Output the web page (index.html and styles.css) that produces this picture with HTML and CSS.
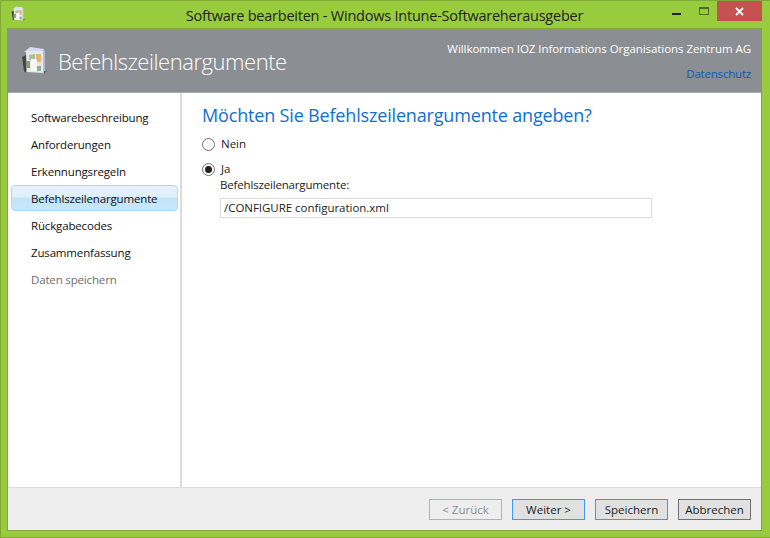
FILE: index.html
```html
<!DOCTYPE html>
<html lang="de">
<head>
<meta charset="utf-8">
<title>Software bearbeiten</title>
<link rel="stylesheet" href="styles.css">
</head>
<body>
<div class="window">
  <div class="titlebar">
    <svg class="app-icon-small" viewBox="0 0 26 30" width="14" height="16"><use href="#box"/></svg>
    <div class="title">Software bearbeiten - Windows Intune-Softwareherausgeber</div>
    <div class="controls">
      <div class="ctl"><span class="min"></span></div>
      <div class="ctl"><span class="max"></span></div>
      <div class="close"><svg viewBox="0 0 9 9" width="9" height="9"><path d="M1 1L8 8M8 1L1 8" stroke="#fff" stroke-width="1.8"/></svg></div>
    </div>
  </div>
  <div class="client">
    <header class="head">
      <svg class="app-icon" viewBox="0 0 26 30" width="26" height="30">
        <defs>
          <g id="box">
            <path d="M3 6L9 1L23 3L22 7Z" fill="#d5daf0"/>
            <path d="M5 5H22V27L6 26Z" fill="#e6e8f0"/>
            <path d="M1 11L5 9V27L3 25Z" fill="#45483f"/>
            <path d="M8 8H20V24H8Z" fill="#eee4d2"/>
            <path d="M15 8H20V16H15Z" fill="#e8b36c"/>
            <path d="M8 9L14 8V13L8 14Z" fill="#a7c293"/>
            <path d="M10 13H16V25H10Z" fill="#f7f7f7"/>
            <path d="M5 15L9 15V22L5 22Z" fill="#8d9786"/>
            <path d="M16 20H20V25H16Z" fill="#8fae9a"/>
            <path d="M22 5L24 4V26L22 28Z" fill="#b4bad6"/>
            <path d="M23 25L26 25L23 28Z" fill="#5c5f63"/>
          </g>
        </defs>
        <use href="#box"/>
      </svg>
      <h1 class="head-title">Befehlszeilenargumente</h1>
      <div class="head-right">
        <div class="welcome">Willkommen IOZ Informations Organisations Zentrum AG</div>
        <a class="privacy">Datenschutz</a>
      </div>
    </header>
    <div class="main">
      <nav class="nav">
        <div class="nav-item">Softwarebeschreibung</div>
        <div class="nav-item">Anforderungen</div>
        <div class="nav-item">Erkennungsregeln</div>
        <div class="nav-item active">Befehlszeilenargumente</div>
        <div class="nav-item">Rückgabecodes</div>
        <div class="nav-item">Zusammenfassung</div>
        <div class="nav-item muted">Daten speichern</div>
      </nav>
      <section class="content">
        <h2 class="question">Möchten Sie Befehlszeilenargumente angeben?</h2>
        <div class="radio-row first"><span class="radio"></span><span>Nein</span></div>
        <div class="radio-row second"><span class="radio checked"></span><span>Ja</span></div>
        <div class="field">
          <div class="field-label">Befehlszeilenargumente:</div>
          <div class="input">/CONFIGURE configuration.xml</div>
        </div>
      </section>
    </div>
    <footer class="foot">
      <div class="btn disabled">&lt; Zurück</div>
      <div class="btn blue">Weiter &gt;</div>
      <div class="btn blue">Speichern</div>
      <div class="btn dark">Abbrechen</div>
    </footer>
  </div>
</div>
</body>
</html>
```
FILE: styles.css
```css
* { box-sizing: border-box; }
html, body { margin: 0; padding: 0; }
body { width: 770px; height: 538px; overflow: hidden; font-family: "Open Sans", "Noto Sans", sans-serif; color: #1a1a1a; }
.window { width: 770px; height: 538px; background: #99cc3c; border: 1px solid #7fa838; border-right: 0; padding: 0 8px 6px 6px; display: flex; flex-direction: column; }
.titlebar { height: 27px; flex: none; display: flex; align-items: center; position: relative; }
.app-icon-small { margin: 0 0 1px 4px; flex: none; filter: blur(0.3px); }
.title { position: absolute; left: 0; right: 0; top: 5px; text-align: center; font-size: 14.5px; line-height: 20px; color: #222; letter-spacing: -0.225px; }
.controls { margin-left: auto; display: flex; align-self: flex-start; position: relative; }
.ctl { width: 27px; height: 20px; display: flex; justify-content: center; align-items: center; }
.min { width: 9px; height: 2px; background: #222; margin-top: 5px; }
.max { width: 10px; height: 8px; border: 1px solid #4f6a24; border-top-width: 2px; }
.close { width: 45px; height: 20px; background: #c75050; display: flex; align-items: center; justify-content: center; }
.client { flex: 1; min-height: 0; display: flex; flex-direction: column; background: #fff; border: 1px solid #7fa838; }
.head { height: 64px; flex: none; background: #8b8e92; border-bottom: 1px solid #a9abae; display: flex; align-items: center; padding: 0 10px 0 13px; }
.app-icon { flex: none; margin-top: 1px; filter: blur(0.4px); }
.head-title { margin: 0 0 0 11px; font-size: 22px; line-height: 30px; font-weight: 300; color: #fff; letter-spacing: -0.45px; }
.head-right { margin-left: auto; align-self: flex-start; text-align: right; padding-top: 12px; }
.welcome { font-size: 11.5px; line-height: 16px; color: #fff; letter-spacing: -0.06px; }
.privacy { display: block; margin-top: 9px; font-size: 11.5px; line-height: 16px; color: #0f5ab4; letter-spacing: -0.2px; }
.main { flex: 1; min-height: 0; display: flex; border-bottom: 1px solid #dcdcdc; }
.nav { width: 174px; flex: none; border-right: 2px solid #dcdcdc; padding: 11px 2px 0 3px; }
.nav-item { height: 27px; padding-left: 19px; font-size: 11.5px; line-height: 25px; color: #111; letter-spacing: -0.16px; border: 1px solid transparent; }
.nav-item.active { height: 26px; line-height: 26px; margin-bottom: 1px; border-color: #a6dcf7; border-radius: 4px; background: linear-gradient(#e4f3fc 0%, #dff0fb 45%, #c4e5f9 50%, #c6e6fa 100%); }
.nav-item.muted { color: #6d6d6d; }
.content { flex: 1; padding: 9px 0 0 20px; }
.question { margin: 0; font-size: 18px; line-height: 26px; font-weight: 400; color: #0f6fd1; letter-spacing: -0.17px; }
.radio-row { display: flex; align-items: center; font-size: 11.5px; line-height: 18px; color: #222; }
.radio-row.first { margin-top: 7px; }
.radio-row.second { margin-top: 7px; }
.radio { width: 13px; height: 13px; border: 1px solid #6f6f6f; border-radius: 50%; background: #fff; margin-right: 6px; position: relative; flex: none; }
.radio.checked::after { content: ""; position: absolute; left: 2px; top: 2px; width: 7px; height: 7px; border-radius: 50%; background: #222; }
.field { margin-left: 18px; }
.field-label { font-size: 11.5px; line-height: 14px; color: #222; letter-spacing: -0.17px; }
.input { width: 432px; height: 20px; margin-top: 6px; border: 1px solid #dadada; padding-left: 3px; font-size: 11.5px; line-height: 18px; color: #222; letter-spacing: -0.03px; }
.foot { height: 42px; flex: none; background: #eeeeee; display: flex; justify-content: flex-end; align-items: flex-start; gap: 10px; padding: 11px 10px 0 0; }
.btn { width: 73px; height: 21px; border: 1px solid #707070; background: #e1e1e1; font-size: 11.5px; line-height: 19px; text-align: center; color: #222; }
.btn.disabled { border-color: #adb2b5; background: #eeeeee; color: #8c8c8c; }
.btn.blue { border-color: #3c9af0; background: #e1e1e1; }
.btn.dark { border-color: #707070; }
```
